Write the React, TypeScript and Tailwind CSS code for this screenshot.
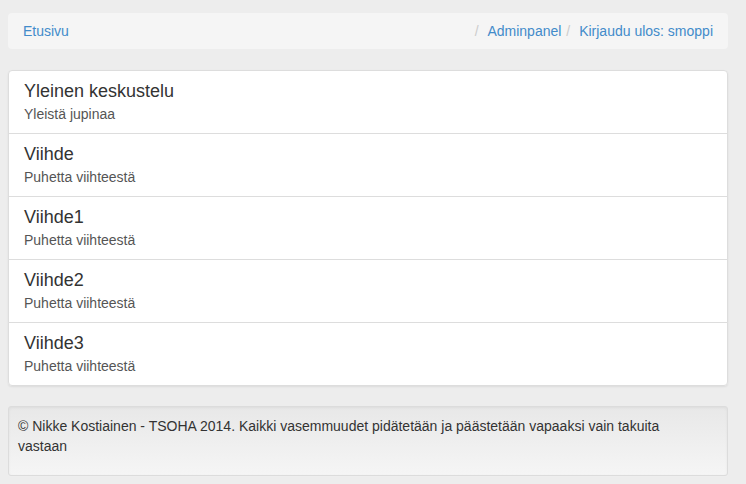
const forums: ReadonlyArray<{ readonly name: string; readonly description: string }> = [
  { name: "Yleinen keskustelu", description: "Yleistä jupinaa" },
  { name: "Viihde", description: "Puhetta viihteestä" },
  { name: "Viihde1", description: "Puhetta viihteestä" },
  { name: "Viihde2", description: "Puhetta viihteestä" },
  { name: "Viihde3", description: "Puhetta viihteestä" },
];

const rightLinks = ["Adminpanel", "Kirjaudu ulos: smoppi"];

export default function App() {
  return (
    <div className="min-h-[484px] bg-[#ededed] px-[8px] pt-[13px] font-['Liberation_Sans',Arial,sans-serif] text-[14px] leading-[20px] text-[#333]">
      <div className="w-[720px]">
        <ol className="flex h-[36px] items-center justify-between rounded-[4px] bg-[#f5f5f5] px-[15px]">
          <li>
            <a className="text-[#428bca]" href="#">
              Etusivu
            </a>
          </li>
          <li className="flex">
            {rightLinks.map((link) => (
              <span className="flex" key={link}>
                <span className="px-[5px] text-[#ccc]">/{"\u00a0"}</span>
                <a className="text-[#428bca]" href="#">
                  {link}
                </a>
              </span>
            ))}
          </li>
        </ol>

        <div className="mt-[21px] flex flex-col rounded-[4px] shadow-[0_1px_2px_rgba(0,0,0,0.075)]">
          {forums.map((forum, index) => (
            <a
              className={
                "block border border-[#ddd] bg-white px-[15px] py-[10px] " +
                (index === 0 ? "rounded-t-[4px] " : "-mt-px ") +
                (index === forums.length - 1 ? "rounded-b-[4px]" : "")
              }
              href="#"
              key={forum.name}
            >
              <h4 className="mb-[4px] text-[18px] leading-[20px] text-[#333]">{forum.name}</h4>
              <p className="text-[14px] leading-[18px] text-[#555]">{forum.description}</p>
            </a>
          ))}
        </div>

        <footer className="mt-[20px] rounded-[3px] border border-[#dcdcdc] bg-[linear-gradient(to_bottom,#e8e8e8,#f5f5f5)] py-[9px] pl-[9px] pr-[30px] shadow-[inset_0_1px_3px_rgba(0,0,0,0.05),0_1px_0_rgba(255,255,255,0.1)]">
          <p className="mb-[10px]">
            © Nikke Kostiainen - TSOHA 2014. Kaikki vasemmuudet pidätetään ja päästetään vapaaksi vain
            takuita vastaan
          </p>
        </footer>
      </div>
    </div>
  );
}
